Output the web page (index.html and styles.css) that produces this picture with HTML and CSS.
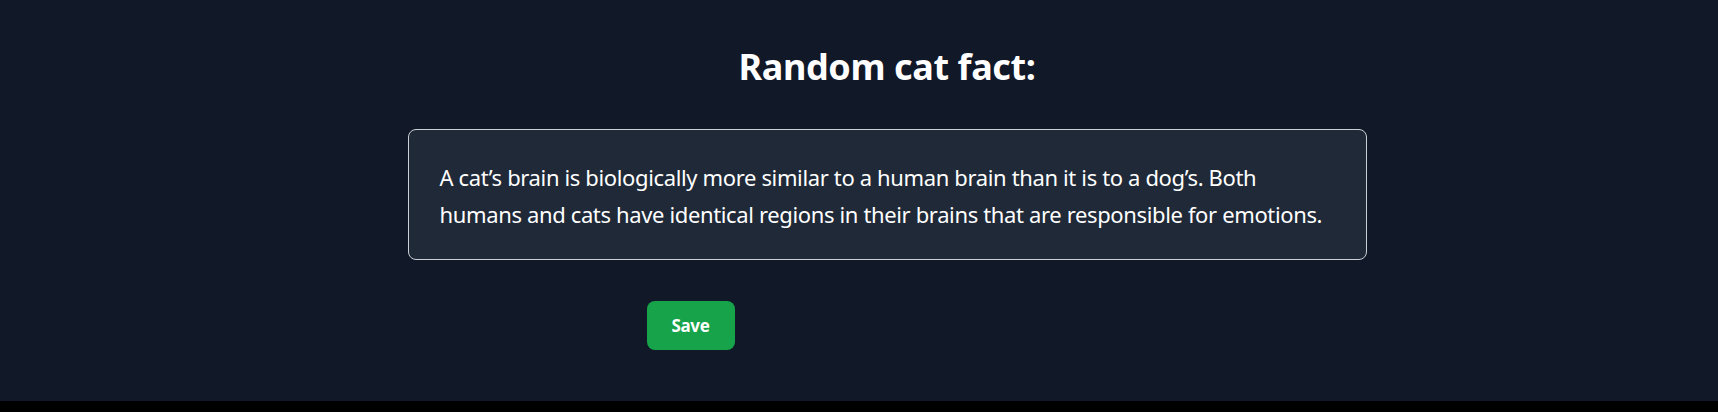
FILE: index.html
```html
<!DOCTYPE html>
<html lang="en">
<head>
<meta charset="utf-8">
<title>Random cat fact</title>
<link rel="stylesheet" href="styles.css">
</head>
<body>
<main class="page">
  <section class="column">
    <h1 class="title">Random cat fact:</h1>
    <div class="fact-card">
      <p class="fact-text">A cat’s brain is biologically more similar to a human brain than it is to a dog’s. Both humans and cats have identical regions in their brains that are responsible for emotions.</p>
    </div>
    <div class="actions">
      <button class="save-btn" type="button">Save</button>
    </div>
  </section>
</main>
</body>
</html>
```
FILE: styles.css
```css
html {
  background: #000;
}
body {
  margin: 0;
  font-family: "Noto Sans", "Open Sans", sans-serif;
  color: #fff;
}
.page {
  height: 401px;
  background: #111827;
  padding-left: 56px;
  box-sizing: border-box;
  padding-top: 40px;
}
.column {
  width: 959px;
  margin: 0 auto;
  display: flex;
  flex-direction: column;
}
.title {
  margin: 0;
  text-align: center;
  font-size: 36px;
  font-weight: 700;
  letter-spacing: -0.4px;
  line-height: 54px;
}
.fact-card {
  margin-top: 35px;
  background: #1f2937;
  border: 1px solid #cbd0d6;
  border-radius: 8px;
  padding: 29px 24px 26px 31px;
}
.fact-text {
  margin: 0;
  font-size: 22px;
  letter-spacing: -0.36px;
  line-height: 37px;
}
.actions {
  display: flex;
  margin-top: 41px;
  padding-left: 239px;
}
.save-btn {
  width: 88px;
  height: 49px;
  border: 0;
  border-radius: 8px;
  background: #16a34a;
  color: #fff;
  font-family: inherit;
  font-size: 17px;
  font-weight: 700;
  letter-spacing: -0.3px;
  cursor: pointer;
}
```
